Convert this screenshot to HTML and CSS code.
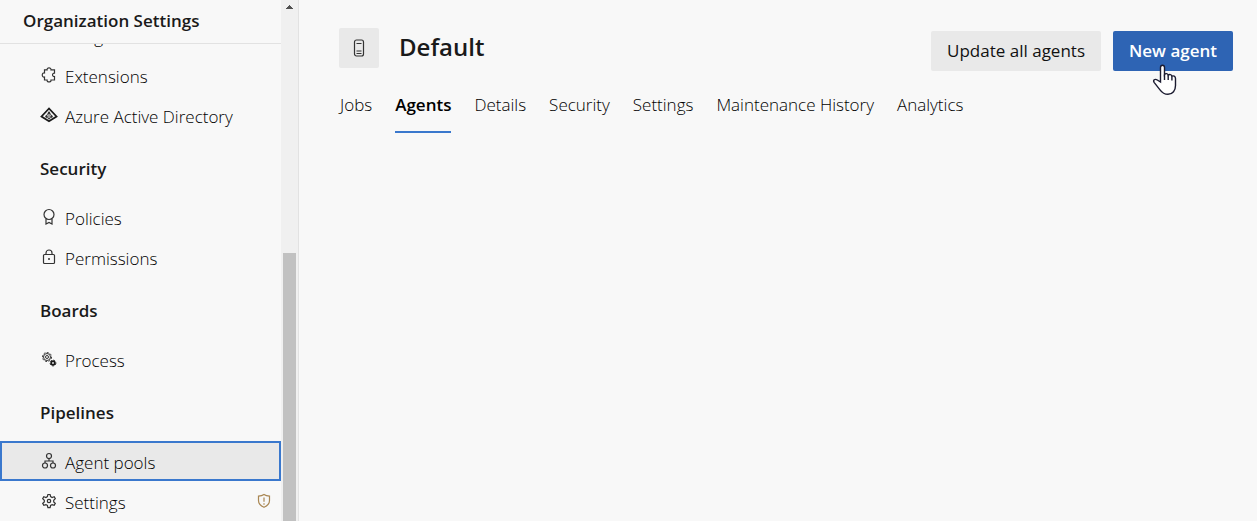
FILE: index.html
```html
<!DOCTYPE html>
<html lang="en">
<head>
<meta charset="utf-8">
<title>Default - Agents</title>
<link rel="stylesheet" href="styles.css">
</head>
<body>
<div class="app">
  <aside class="sidebar">
    <div class="side-main">
      <h2 class="side-title">Organization Settings</h2>
      <div class="side-list">
        <nav class="side-scroll" aria-label="Organization settings">
          <a class="item" href="#"><span class="icon"></span><span class="label">Usage</span></a>
          <a class="item" href="#">
            <svg class="icon" viewBox="0 0 18 18"><path d="M4.500 3.800h2.600C6.500 1.200 11.500 1.200 11 3.800h3.500v3.400c-2.600-.3-2.600 3.600 0 3.300V14H11c.5 2.600-4.500 2.600-3.900 0H4.500v-3C1.500 11.800 1.500 6.200 4.500 7z"/></svg>
            <span class="label">Extensions</span></a>
          <a class="item" href="#">
            <svg class="icon bold" viewBox="0 0 18 18"><path d="M9 2.500 1.500 10.500 9 15.200l7.500-4.700z"/><path class="thin" d="M9 5.500v8M9 6l-3 4.500 3 2.500 3-2.500z"/><circle class="fill" cx="9" cy="7" r="1.200"/><circle class="fill" cx="6.500" cy="10.500" r="1.200"/><circle class="fill" cx="11.500" cy="10.500" r="1.200"/></svg>
            <span class="label">Azure Active Directory</span></a>
          <h3 class="group">Security</h3>
          <a class="item" href="#">
            <svg class="icon" viewBox="0 0 18 18"><circle cx="9" cy="6.500" r="5"/><path d="M6 11v5l3-1.500 3 1.500v-5"/></svg>
            <span class="label">Policies</span></a>
          <a class="item" href="#">
            <svg class="icon" viewBox="0 0 18 18"><rect x="3.500" y="6.500" width="11" height="9" rx="1"/><path d="M6 6.500V5a3 3 0 0 1 6 0v1.500"/><circle class="fill" cx="9" cy="11" r="1"/></svg>
            <span class="label">Permissions</span></a>
          <h3 class="group">Boards</h3>
          <a class="item" href="#">
            <svg class="icon fine" viewBox="0 0 18 18"><circle cx="7" cy="7" r="3.500"/><circle cx="7" cy="7" r="1.500"/><circle class="dashed" cx="7" cy="7" r="4.500"/><circle class="bold" cx="13" cy="13" r="1.800"/><circle class="dashed" cx="13" cy="13" r="2.900"/></svg>
            <span class="label">Process</span></a>
          <h3 class="group">Pipelines</h3>
          <a class="item selected" href="#" aria-current="page">
            <svg class="icon" viewBox="0 0 18 18"><circle cx="9" cy="4" r="2.500"/><circle cx="5" cy="13.500" r="2.500"/><circle cx="13" cy="13.500" r="2.500"/><path d="M9 6.500V9M5 11V9h8v2"/></svg>
            <span class="label">Agent pools</span></a>
          <a class="item" href="#">
            <svg class="icon" viewBox="0 0 18 18"><path d="m7.400 4.600.5-2.100h2.200l.5 2.100 1.500.9 2.100-.7 1.100 1.900-1.600 1.500v1.700l1.600 1.500-1.100 1.900-2.100-.7-1.500.9-.5 2.100H7.900l-.5-2.100-1.500-.9-2.100.7-1.100-1.900 1.600-1.500V8.200L2.700 6.700l1.100-1.900 2.100.7z"/><circle cx="9" cy="9" r="1.700"/></svg>
            <span class="label">Settings</span>
            <svg class="icon shield" viewBox="0 0 18 18"><path d="M9 2.500c1.500 1.100 3.500 1.600 5.500 1.600v4.400c0 3.300-2.500 5.500-5.500 6.800-3-1.300-5.500-3.500-5.500-6.800V4.100C5.500 4.100 7.500 3.600 9 2.500zM9 5.500v4.300M9 11.300v1.400"/></svg></a>
        </nav>
      </div>
    </div>
    <div class="scrollbar" aria-hidden="true">
      <svg class="up" viewBox="0 0 7 4"><path d="M3 0h1v1h1v1h1v1h1v1H0V3h1V2h1V1h1z"/></svg>
      <div class="thumb"></div>
    </div>
  </aside>
  <main class="content">
    <header class="head">
      <div class="badge">
        <svg class="icon" viewBox="0 0 18 18"><rect x="4.500" y="1" width="9" height="16" rx="2"/><path d="M6.500 4.500h5M6.500 12h5M6.500 14.500h5"/></svg>
      </div>
      <h1 class="title">Default</h1>
      <div class="actions">
        <button class="btn" type="button">Update all agents</button>
        <button class="btn primary" type="button">New agent
          <svg class="cursor" viewBox="0 0 28 34"><path d="M9.500 19V4.500c0-3 4-3 4 0v7c1-1.400 3.300-1.100 3.700.7 1.200-1.100 3.300-.7 3.700 1 1.400-.8 3.600.1 3.600 2.200v7.100c0 5-2.800 8.800-7.500 8.800-3.800 0-5.800-1.500-8-4.500l-5.700-7.200c-1.700-2.300.5-4.200 3-2.600z"/><path d="M13.500 11.500V17M17.200 12.200V17M20.900 13.200v4.300"/></svg>
        </button>
      </div>
    </header>
    <nav class="tabs" aria-label="Pool">
      <a class="tab" href="#">Jobs</a>
      <a class="tab active" href="#" aria-current="page">Agents</a>
      <a class="tab" href="#">Details</a>
      <a class="tab" href="#">Security</a>
      <a class="tab" href="#">Settings</a>
      <a class="tab" href="#">Maintenance History</a>
      <a class="tab" href="#">Analytics</a>
    </nav>
  </main>
</div>
</body>
</html>
```
FILE: styles.css
```css
* { box-sizing: border-box; }
body {
  margin: 0;
  background: #f8f8f8;
  color: #000;
  font: 17px/24px "Open Sans", "Noto Sans", sans-serif;
}
a { color: inherit; text-decoration: none; }
h1, h2, h3 { margin: 0; font-weight: 600; color: #1a1a1a; }
.app { display: flex; height: 100vh; overflow: hidden; }
.sidebar { display: flex; flex: 0 0 299px; border-right: 1px solid #e2e2e2; }
.side-main { display: flex; flex-direction: column; flex: 1; min-width: 0; }
.side-title {
  padding: 9px 23px 10px;
  border-bottom: 1px solid #e2e2e2;
  font-size: 17px;
  line-height: 24px;
}
.side-list { flex: 1; overflow: hidden; }
.side-scroll { margin-top: -29px; }
.item {
  display: flex;
  align-items: center;
  gap: 7px;
  height: 40px;
  padding: 0 8px 0 40px;
  font-weight: 300;
}
.label { padding-top: 3px; }
.group { padding: 22px 40px 16px; font-size: 17px; line-height: 24px; }
.selected { background: #e9e9e9; outline: 2px solid #3a78cd; outline-offset: -2px; }
.icon {
  flex: none;
  width: 18px;
  height: 18px;
  fill: none;
  stroke: #333;
  stroke-width: 1.2;
}
.bold { stroke: #1a1a1a; stroke-width: 1.8; }
.thin { stroke-width: 0.8; }
.fine { stroke-width: 1; }
.fill { fill: #333; stroke: none; }
.dashed { stroke-dasharray: 2 1.4; }
.shield { margin-left: auto; stroke: #a98652; }
.scrollbar {
  display: flex;
  flex-direction: column;
  justify-content: space-between;
  width: 17px;
  padding: 5px 2px 0;
  background: #f0f0f0;
}
.up { align-self: center; width: 7px; height: 4px; fill: #505050; }
.thumb { height: 52%; background: #c1c1c1; }
.content { flex: 1; min-width: 0; padding: 28px 24px 0 40px; }
.head { display: flex; align-items: flex-start; }
.badge {
  display: grid;
  place-items: center;
  width: 40px;
  height: 40px;
  border-radius: 2px;
  background: #e9e9e9;
}
.title { padding: 3px 0 0 20px; font-size: 24px; line-height: 32px; }
.actions { display: flex; gap: 12px; margin: 3px 0 0 auto; }
.btn {
  position: relative;
  height: 40px;
  padding: 0 16px;
  border: 0;
  border-radius: 2px;
  background: #e9e9e9;
  color: #111;
  font: 500 17px/24px "Open Sans", "Noto Sans", sans-serif;
  white-space: nowrap;
}
.primary { background: #2e64b4; color: #fff; font-weight: 600; }
.cursor {
  position: absolute;
  top: 32px;
  left: 38px;
  width: 28px;
  height: 34px;
  fill: #fff;
  stroke: #1b1b30;
  stroke-width: 1.4;
}
.tabs { display: flex; gap: 23px; margin-top: 22px; padding-left: 1px; }
.tab { padding: 0 0 15px; border-bottom: 2px solid transparent; line-height: 23px; font-weight: 300; }
.active { border-color: #3a78cd; font-weight: 600; }
```
